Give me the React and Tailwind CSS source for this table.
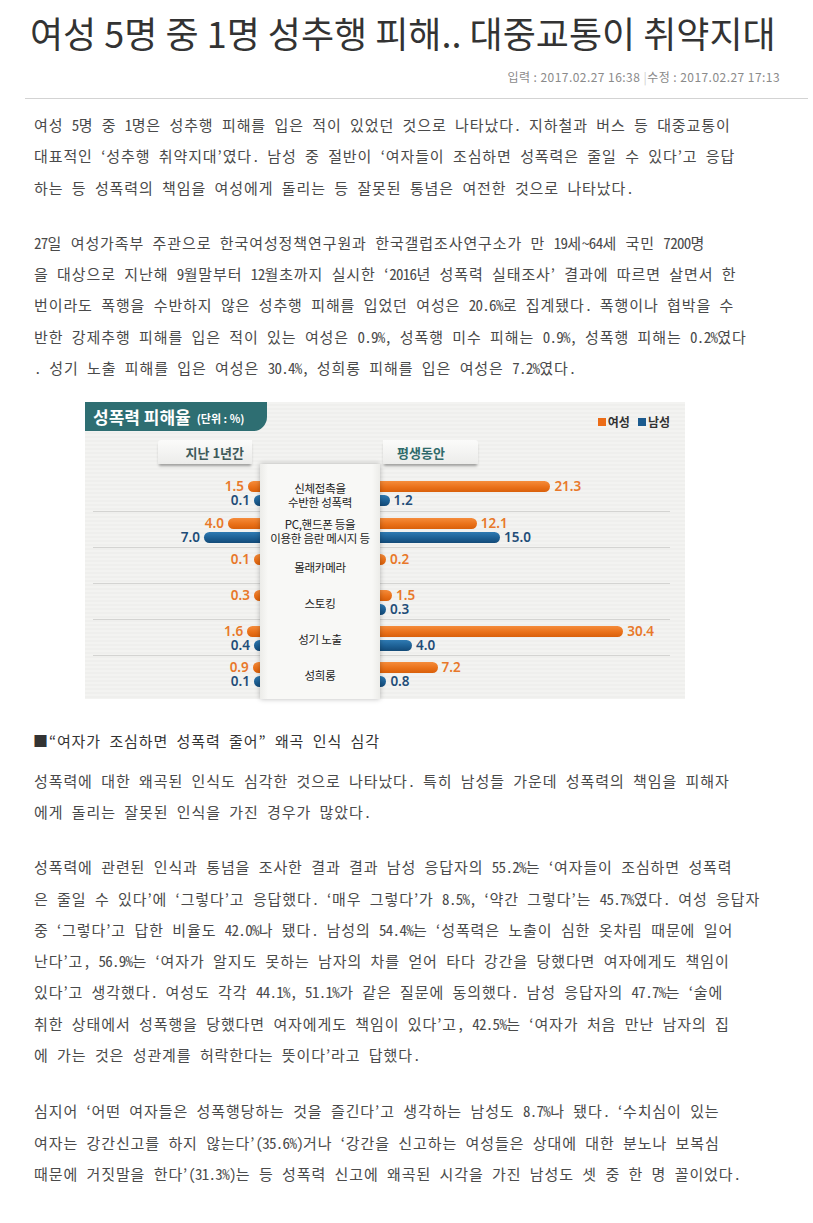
import React from 'react';

const KR = "font-['Noto_Sans_CJK_KR','Noto_Sans_CJK_SC',sans-serif]";
const NUM = "font-['Noto_Sans','Noto_Sans_CJK_KR',sans-serif]";

const para1 = [
  '여성 5명 중 1명은 성추행 피해를 입은 적이 있었던 것으로 나타났다. 지하철과 버스 등 대중교통이',
  '대표적인 ‘성추행 취약지대’였다. 남성 중 절반이 ‘여자들이 조심하면 성폭력은 줄일 수 있다’고 응답',
  '하는 등 성폭력의 책임을 여성에게 돌리는 등 잘못된 통념은 여전한 것으로 나타났다.',
];

const para2 = [
  '27일 여성가족부 주관으로 한국여성정책연구원과 한국갤럽조사연구소가 만 19세~64세 국민 7200명',
  '을 대상으로 지난해 9월말부터 12월초까지 실시한 ‘2016년 성폭력 실태조사’ 결과에 따르면 살면서 한',
  '번이라도 폭행을 수반하지 않은 성추행 피해를 입었던 여성은 20.6%로 집계됐다. 폭행이나 협박을 수',
  '반한 강제추행 피해를 입은 적이 있는 여성은 0.9%, 성폭행 미수 피해는 0.9%, 성폭행 피해는 0.2%였다',
  '. 성기 노출 피해를 입은 여성은 30.4%, 성희롱 피해를 입은 여성은 7.2%였다.',
];

const para3 = [
  '성폭력에 대한 왜곡된 인식도 심각한 것으로 나타났다. 특히 남성들 가운데 성폭력의 책임을 피해자',
  '에게 돌리는 잘못된 인식을 가진 경우가 많았다.',
];

const para4 = [
  '성폭력에 관련된 인식과 통념을 조사한 결과 결과 남성 응답자의 55.2%는 ‘여자들이 조심하면 성폭력',
  '은 줄일 수 있다’에 ‘그렇다’고 응답했다. ‘매우 그렇다’가 8.5%, ‘약간 그렇다’는 45.7%였다. 여성 응답자',
  '중 ‘그렇다’고 답한 비율도 42.0%나 됐다. 남성의 54.4%는 ‘성폭력은 노출이 심한 옷차림 때문에 일어',
  '난다’고, 56.9%는 ‘여자가 알지도 못하는 남자의 차를 얻어 타다 강간을 당했다면 여자에게도 책임이',
  '있다’고 생각했다. 여성도 각각 44.1%, 51.1%가 같은 질문에 동의했다. 남성 응답자의 47.7%는 ‘술에',
  '취한 상태에서 성폭행을 당했다면 여자에게도 책임이 있다’고, 42.5%는 ‘여자가 처음 만난 남자의 집',
  '에 가는 것은 성관계를 허락한다는 뜻이다’라고 답했다.',
];

const para5 = [
  '심지어 ‘어떤 여자들은 성폭행당하는 것을 즐긴다’고 생각하는 남성도 8.7%나 됐다. ‘수치심이 있는',
  '여자는 강간신고를 하지 않는다’(35.6%)거나 ‘강간을 신고하는 여성들은 상대에 대한 분노나 보복심',
  '때문에 거짓말을 한다’(31.3%)는 등 성폭력 신고에 왜곡된 시각을 가진 남성도 셋 중 한 명 꼴이었다.',
];

// 성폭력 피해율 (지난 1년간 / 평생동안), 여성 f, 남성 m
const rows = [
  { label: ['신체접촉을', '수반한 성폭력'], lf: 1.5, lm: 0.1, rf: 21.3, rm: 1.2 },
  { label: ['PC,핸드폰 등을', '이용한 음란 메시지 등'], lf: 4.0, lm: 7.0, rf: 12.1, rm: 15.0 },
  { label: ['몰래카메라'], lf: 0.1, lm: null, rf: 0.2, rm: null },
  { label: ['스토킹'], lf: 0.3, lm: null, rf: 1.5, rm: 0.3 },
  { label: ['성기 노출'], lf: 1.6, lm: 0.4, rf: 30.4, rm: 4.0 },
  { label: ['성희롱'], lf: 0.9, lm: 0.1, rf: 7.2, rm: 0.8 },
];

const barWidth = (v) => Math.max(6, v * 8);

// numbers are set tighter, like the narrow digits of the original font
const renderLine = (line) =>
  line.split(/([0-9.,%()~]+)/).map((part, i) =>
    i % 2 === 1 ? (
      <span key={i} className="tracking-[-0.7px]">{part}</span>
    ) : (
      part
    )
  );

const Paragraph = ({ lines, className = '' }) => (
  <p className={`pl-[34px] whitespace-nowrap ${className}`}>
    {lines.map((line, i) => (
      <React.Fragment key={i}>
        {renderLine(line)}
        {i < lines.length - 1 && <br />}
      </React.Fragment>
    ))}
  </p>
);

const Bar = ({ value, female, side }) => {
  if (value === null) return <div className="h-[11px]" />;
  const bar = female
    ? 'bg-[linear-gradient(180deg,#f58c3b_0%,#ea7119_55%,#d9600b_100%)]'
    : 'bg-[linear-gradient(180deg,#2f7bb3_0%,#1d6094_55%,#134a78_100%)]';
  const text = female ? 'text-[#e8782a]' : 'text-[#1f4d78]';
  const num = (
    <span className={`${NUM} text-[13.5px] leading-[11px] font-semibold ${text}`}>
      {value.toFixed(1)}
    </span>
  );
  if (side === 'left') {
    return (
      <div className="flex h-[11px] items-center justify-end gap-[4px]">
        {num}
        <div className={`h-[11px] rounded-l-full ${bar}`} style={{ width: barWidth(value) }} />
      </div>
    );
  }
  return (
    <div className="flex h-[11px] items-center gap-[4px]">
      <div className={`h-[11px] rounded-r-full ${bar}`} style={{ width: barWidth(value) }} />
      {num}
    </div>
  );
};

const Chart = () => (
  <div className="ml-[85px] mt-[19px] w-[600px] bg-[repeating-linear-gradient(180deg,#f3f3f1_0px,#f3f3f1_2px,#ebebe9_3px,#f3f3f1_4px)] tracking-normal [font-feature-settings:normal]">
    {/* title tab + legend */}
    <div className="flex h-[29px] items-start justify-between">
      <div className="flex h-[29px] w-[182px] items-center gap-[6px] rounded-br-[14px] bg-[#2e6e72] pl-[8px] text-white">
        <span className={`${KR} text-[17px] font-bold leading-none`}>성폭력 피해율</span>
        <span className={`${KR} mt-[3px] text-[11px] font-bold leading-none`}>(단위 : %)</span>
      </div>
      <div className={`${KR} mr-[15px] mt-[13px] flex items-center gap-[8px] text-[12px] font-bold leading-[14px] text-[#333]`}>
        <span className="flex items-center gap-[2px]">
          <span className="h-[8px] w-[8px] bg-[#ec6c16]" />
          여성
        </span>
        <span className="flex items-center gap-[2px]">
          <span className="h-[8px] w-[8px] bg-[#1b5b8f]" />
          남성
        </span>
      </div>
    </div>

    {/* column headers */}
    <div className="mt-[9px] flex h-[24px]">
      <div className="w-[175px]">
        <div className={`${KR} ml-[73px] flex h-[24px] w-[94px] items-center justify-end rounded-tl-[3px] bg-[linear-gradient(180deg,#fbfbfa,#ececea)] pr-[8px] text-[13px] font-bold text-[#3f5a5a] shadow-[0_3px_3px_-1px_rgba(0,0,0,0.35)]`}>
          지난 1년간
        </div>
      </div>
      <div className="w-[120px]" />
      <div className="flex-1">
        <div className={`${KR} ml-[3px] flex h-[24px] w-[95px] items-center rounded-tr-[3px] bg-[linear-gradient(180deg,#fbfbfa,#ececea)] pl-[14px] text-[13px] font-bold text-[#2f6a6a] shadow-[0_3px_3px_-1px_rgba(0,0,0,0.35)]`}>
          평생동안
        </div>
      </div>
    </div>

    {/* rows */}
    <div className="flex">
      <div className="ml-[8px] w-[167px] pt-[11px] pb-[8px]">
        {rows.map((r, i) => (
          <div
            key={i}
            className={`box-border flex h-[36px] flex-col gap-[3px] pt-[6px] ${i > 0 ? 'border-t border-[#d4d4d2]' : ''}`}
          >
            <Bar value={r.lf} female side="left" />
            <Bar value={r.lm} side="left" />
          </div>
        ))}
      </div>
      <div className="relative z-10 w-[120px] bg-[linear-gradient(90deg,#ecece9_0px,#f8f8f6_8px,#f8f8f6_112px,#ecece9_120px)] pt-[11px] shadow-[0_0_5px_rgba(0,0,0,0.28)]">
        {rows.map((r, i) => (
          <div
            key={i}
            className={`${KR} flex h-[36px] flex-col items-center justify-center pt-[4px] text-center text-[11.5px] font-normal leading-[14px] tracking-[-0.3px] text-[#222]`}
          >
            {r.label.map((t) => (
              <span key={t} className="whitespace-nowrap">{t}</span>
            ))}
          </div>
        ))}
      </div>
      <div className="mr-[15px] flex-1 pt-[11px] pb-[8px]">
        {rows.map((r, i) => (
          <div
            key={i}
            className={`box-border flex h-[36px] flex-col gap-[3px] pt-[6px] ${i > 0 ? 'border-t border-[#d4d4d2]' : ''}`}
          >
            <Bar value={r.rf} female side="right" />
            <Bar value={r.rm} side="right" />
          </div>
        ))}
      </div>
    </div>
  </div>
);

export default function App() {
  return (
    <div className={`${KR} min-h-[1223px] w-[813px] bg-white pb-[32px]`}>
      <h1 className="whitespace-nowrap pl-[30px] pt-[12px] text-[36px] font-normal leading-[40px] text-[#333]">
        여성 5명 중 1명 성추행 피해.. 대중교통이 취약지대
      </h1>
      <div className="mt-[17px] pr-[33px] text-right text-[12px] leading-[16px] tracking-[0.45px] text-[#8a8a8a]">
        입력 : 2017.02.27 16:38 <span className="text-[#cfcfcf]">|</span>수정 : 2017.02.27 17:13
      </div>
      <div className="ml-[25px] mr-[5px] mt-[13px] border-t border-[#d3d3d3]" />

      <article className="text-[15px] leading-[31.3px] tracking-[0.9px] text-[#4a4a4a] [font-feature-settings:'hwid']">
        <Paragraph lines={para1} className="mt-[10px]" />
        <Paragraph lines={para2} className="mt-[24px]" />
        <Chart />
        <p className="mt-[26px] whitespace-nowrap pl-[33px] text-[#333]">
          ■“여자가 조심하면 성폭력 줄어” 왜곡 인식 심각
        </p>
        <Paragraph lines={para3} className="mt-[8px]" />
        <Paragraph lines={para4} className="mt-[24px]" />
        <Paragraph lines={para5} className="mt-[25px]" />
      </article>
    </div>
  );
}
